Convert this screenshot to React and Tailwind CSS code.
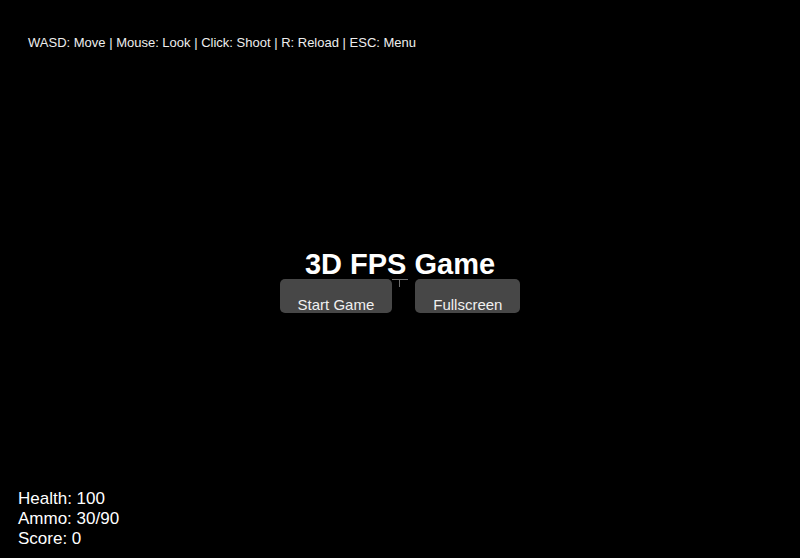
const FONT = { fontFamily: '"Liberation Sans", Arial, sans-serif' };

const HUD_LINES = ["Health: 100", "Ammo: 30/90", "Score: 0"];

const MenuButton = ({ label }) => (
    <button className="h-[34px] px-[18px] pt-[16px] rounded-[5px] bg-[#474747] text-[15px] leading-[17px] text-[#f0f0f0]">
        {label}
    </button>
);

export default function App() {
    return (
        <div className="relative flex flex-col w-full h-[558px] bg-black overflow-hidden text-white" style={FONT}>
            {/* crosshair */}
            <div className="absolute left-[392px] top-[279px] w-[16px] h-px bg-[#6f6f6f]" />
            <div className="absolute left-[399px] top-[279px] w-px h-[8px] bg-[#6f6f6f]" />

            {/* controls hint */}
            <div className="pt-[35px] pl-[28px] text-[13px] leading-[15px] text-[#eeeeee]">
                WASD: Move | Mouse: Look | Click: Shoot | R: Reload | ESC: Menu
            </div>

            {/* menu */}
            <div className="flex flex-col items-center mt-[200px]">
                <h1 className="text-[29px] leading-[29px] font-bold text-white">3D FPS Game</h1>
                <div className="flex gap-[23px]">
                    <MenuButton label="Start Game" />
                    <MenuButton label="Fullscreen" />
                </div>
            </div>

            {/* stats */}
            <div className="mt-auto pl-[18px] pb-[9px] text-[17px] leading-[20px] text-white">
                {HUD_LINES.map((line) => (
                    <div key={line}>{line}</div>
                ))}
            </div>
        </div>
    );
}
